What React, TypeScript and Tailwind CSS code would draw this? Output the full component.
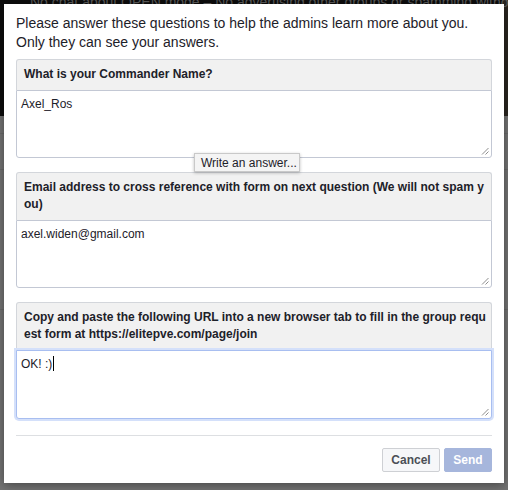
import React from "react";

function Grip() {
  return (
    <svg className="absolute right-[2px] bottom-[2px]" width="8" height="8" viewBox="0 0 8 8">
      <line x1="1" y1="7.5" x2="7.5" y2="1" stroke="#8d8d8d" strokeWidth="1" />
      <line x1="4.5" y1="7.5" x2="7.5" y2="4.5" stroke="#8d8d8d" strokeWidth="1" />
    </svg>
  );
}

function Question({
  lines,
  answer,
  focused,
  caret,
}: {
  lines: string[];
  answer: string;
  focused?: boolean;
  caret?: boolean;
}) {
  return (
    <div className="flex flex-col">
      <div className="rounded-t-[3px] border border-b-0 border-[#d3d6db] bg-[#f1f1f1] px-[7px] py-[6px] text-[12px] leading-[17.6px] font-bold text-[#1d2129]">
        {lines.map((l, i) => (
          <div key={i} className="whitespace-nowrap">
            {l}
          </div>
        ))}
      </div>
      <div
        className={
          focused
            ? "relative h-[69px] rounded-b-[3px] border border-[#a8bef0] bg-white px-[4px] pt-[5px] text-[12px] leading-[16px] text-[#1d2129] shadow-[0_0_0_2px_#d4e0fa]"
            : "relative h-[68px] rounded-b-[3px] border border-[#c3c8d4] bg-white px-[4px] pt-[5px] text-[12px] leading-[16px] text-[#1d2129]"
        }
      >
        <span>{answer}</span>
        {caret && <span className="ml-[1px] inline-block h-[15px] w-[1px] bg-black align-[-3px]" />}
        <Grip />
      </div>
    </div>
  );
}

export default function App() {
  return (
    <div
      className="relative h-[490px] w-[508px] overflow-hidden bg-[#747474]"
      style={{ fontFamily: '"Liberation Sans", Arial, sans-serif' }}
    >
      {/* dimmed page behind */}
      <div className="flex h-[116px] bg-[#0d0d0d]">
        <div className="flex-1" />
        <div className="w-[6px] bg-[#2a2520]" />
      </div>
      <div className="absolute left-[30px] top-[-5px] whitespace-nowrap text-[14px] leading-[14px] text-[#5c5c5c]">
        No chat about OPEN mode – No advertising other groups or spamming without consent
      </div>
      <div className="flex flex-col">
        <div className="h-[18px] border-b border-[#6a6a6a]" />
        <div className="h-[36px] border-b border-[#6a6a6a]" />
        <div className="h-[140px] border-b border-[#6a6a6a]" />
      </div>

      {/* modal */}
      <div className="absolute left-[4px] top-[4px] flex h-[479px] w-[500px] flex-col bg-white px-[12px] shadow-[0_2px_10px_rgba(0,0,0,0.4)]">
        <div className="pt-[10px] text-[14px] leading-[19px] text-[#1d2129]">
          Please answer these questions to help the admins learn more about you.
          <br />
          Only they can see your answers.
        </div>
        <div className="mt-[7px] flex flex-col gap-[14px]">
          <Question lines={["What is your Commander Name?"]} answer="Axel_Ros" />
          <Question
            lines={[
              "Email address to cross reference with form on next question (We will not spam y",
              "ou)",
            ]}
            answer="axel.widen@gmail.com"
          />
          <Question
            lines={[
              "Copy and paste the following URL into a new browser tab to fill in the group requ",
              "est form at https://elitepve.com/page/join",
            ]}
            answer="OK! :)"
            focused
            caret
          />
        </div>
        <div className="mt-[16px] border-t border-[#dddfe2]" />
        <div className="mt-[12px] flex justify-end gap-[4px]">
          <button className="h-[24px] w-[58px] rounded-[2px] border border-[#ced0d4] bg-[#f6f7f9] text-[12px] font-bold text-[#4b4f56]">
            Cancel
          </button>
          <button className="h-[24px] w-[48px] rounded-[2px] border border-[#a6b6dc] bg-[#a6b6dc] text-[12px] font-bold text-white">
            Send
          </button>
        </div>
      </div>

      {/* tooltip */}
      <div className="absolute left-[194px] top-[153px] flex h-[19px] w-[106px] items-center whitespace-nowrap border border-[#c9c9c9] bg-[#f4f4f4] px-[6px] text-[12px] text-[#1d2129] shadow-[0_1px_3px_rgba(0,0,0,0.25)]">
        Write an answer...
      </div>
    </div>
  );
}
